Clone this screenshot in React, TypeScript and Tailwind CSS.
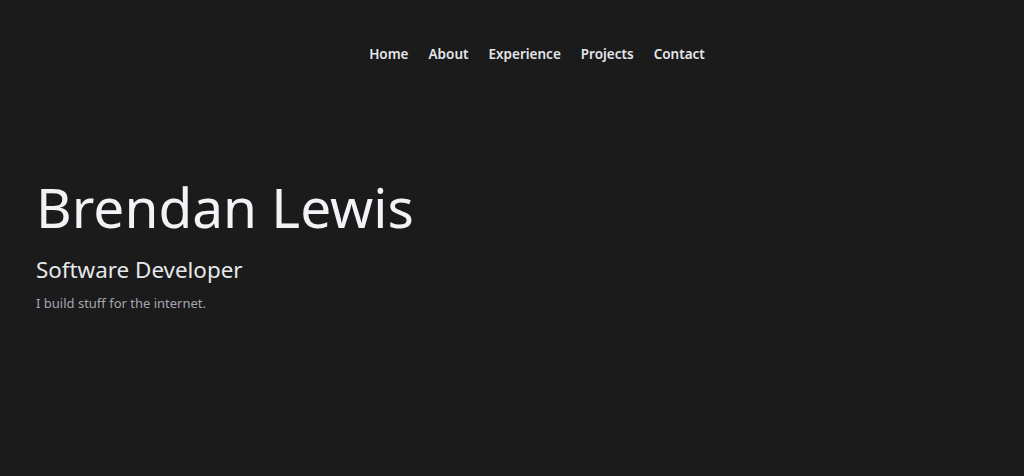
const links = ["Home", "About", "Experience", "Projects", "Contact"];

export default function App() {
  return (
    <div
      className="min-h-[476px] w-full bg-[#1b1b1b] text-[#e9ebef]"
      style={{ fontFamily: '"Noto Sans", "Open Sans", sans-serif' }}
    >
      <nav className="flex justify-center pl-[50px] pt-[43px]">
        <ul className="flex gap-5 text-[13.5px] font-semibold text-[#e4e6ea]">
          {links.map((l) => (
            <li key={l}>
              <a href="#" className="leading-[22px]">
                {l}
              </a>
            </li>
          ))}
        </ul>
      </nav>
      <section className="px-9 pt-[107px]">
        <h1 className="text-[55px] leading-[70px] text-[#f1f3f7]">Brendan Lewis</h1>
        <h2 className="mt-[13px] text-[22.4px] leading-[30px] text-[#e6e8ec]">
          Software Developer
        </h2>
        <p className="mt-[9px] text-[13px] leading-[18px] text-[#a3a7b0]">
          I build stuff for the internet.
        </p>
      </section>
    </div>
  );
}
